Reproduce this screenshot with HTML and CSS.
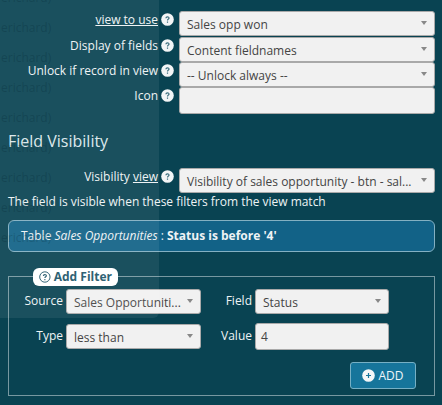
FILE: index.html
```html
<!DOCTYPE html>
<html lang="en">
<head>
<meta charset="utf-8">
<title>Field settings</title>
<link rel="stylesheet" href="styles.css">
</head>
<body>
<svg class="defs" width="0" height="0" aria-hidden="true">
  <symbol id="help" viewBox="0 0 13 13"><circle cx="6.5" cy="6.5" r="6.3" fill="#f3f5f6"/><path d="M4.9 5.2C5 3.3 8.1 3.4 8 5.1C7.9 6.2 6.5 6.1 6.5 7.5M6.5 8.6V9.8" fill="none" stroke="#386b7b" stroke-width="1.2"/></symbol>
</svg>
<main class="panel">
  <section class="rows">
    <div class="row"><label class="label"><u>view to use</u></label><svg class="help"><use href="#help"/></svg><div class="select"><span>Sales opp won</span></div></div>
    <div class="row"><label class="label">Display of fields</label><svg class="help"><use href="#help"/></svg><div class="select"><span>Content fieldnames</span></div></div>
    <div class="row"><label class="label">Unlock if record in view</label><svg class="help"><use href="#help"/></svg><div class="select"><span>-- Unlock always --</span></div></div>
    <div class="row"><label class="label">Icon</label><svg class="help"><use href="#help"/></svg><div class="select input"></div></div>
  </section>
  <h2 class="title">Field Visibility</h2>
  <div class="row"><label class="label">Visibility <u>view</u></label><svg class="help"><use href="#help"/></svg><div class="select"><span>Visibility of sales opportunity - btn - sal...</span></div></div>
  <p class="hint">The field is visible when these filters from the view match</p>
  <div class="info"><span>Table <em>Sales Opportunities</em> : <b>Status is before '4'</b></span></div>
  <section class="filter">
    <h3 class="legend"><svg width="12" height="12" viewBox="0 0 12 12" fill="none" stroke="#20566a"><circle cx="6" cy="6" r="5.3"/><path d="M4.4 4.9C4.5 3.1 7.6 3.1 7.5 4.8C7.4 5.8 6 5.8 6 7M6 8V9.2" stroke-width="1.1"/></svg><span>Add Filter</span></h3>
    <div class="grid">
      <label class="name">Source</label><div class="select"><span>Sales Opportuniti...</span></div>
      <label class="name">Field</label><div class="select"><span>Status</span></div>
      <label class="name">Type</label><div class="select"><span>less than</span></div>
      <label class="name">Value</label><div class="select input value"><span>4</span></div>
    </div>
    <button class="add"><svg width="13" height="13" viewBox="0 0 13 13"><circle cx="6.5" cy="6.5" r="6.3" fill="#f3f6f8"/><path d="M4 6.5H9M6.5 4V9" stroke="#16759b" stroke-width="1.2"/></svg><span>ADD</span></button>
  </section>
</main>
<aside class="ghost">
  <span>erichard)</span><span>erichard)</span><span>erichard)</span><span>erichard)</span><span>erichard)</span><span>erichard)</span><span>erichard)</span><span>erichard)</span><span>erichard)</span>
</aside>
</body>
</html>
```
FILE: styles.css
```css
* { box-sizing: border-box; }
body { margin: 0; height: 405px; overflow: hidden; position: relative; background: #094352; color: #eef3f5; font: 12px/18px "Open Sans", sans-serif; }
.defs { position: absolute; }
.panel { padding: 11px 7px 0 8px; }
.rows { display: grid; grid-template-rows: 26px 25px 25px 27px; }
.row { display: flex; align-items: flex-start; height: 25px; }
.label { width: 150px; text-align: right; font-weight: 500; white-space: nowrap; }
.help { width: 13px; height: 13px; margin: 2px 5px 0 3px; flex: none; }
.select { flex: 1; min-width: 0; height: 25px; display: flex; align-items: center; justify-content: space-between; padding: 3px 7px 0 7px; background: #f1f1f1; border: 1px solid #a9a9a9; border-radius: 3px; color: #444; font-size: 12px; line-height: 18px; white-space: nowrap; }
.select::after { content: ""; border: 3px solid transparent; border-top: 4px solid #888; border-bottom: 0; margin-top: -4px; }
.input { height: 27px; }
.input::after { display: none; }
.title { margin: 16px 0 15px; font-size: 16px; line-height: 23px; font-weight: 400; color: #dce8eb; }
.hint { margin: 0 0 9px; font-weight: 500; letter-spacing: -.02px; white-space: nowrap; }
.info { height: 32px; padding: 6px 12px; background: #126287; border: 1px solid #83b0c2; border-radius: 6px; white-space: nowrap; font-weight: 500; }
.info b { font-weight: 700; }
.filter { margin-top: 24px; height: 120px; border: 1px solid #7798a1; padding: 0 18px 0 12px; }
.legend { display: flex; align-items: center; gap: 3px; width: 85px; height: 18px; margin: -9px 0 3px 12px; padding: 0 6px; border-radius: 6px; background: #fff; color: #20566a; font-size: 12px; font-weight: 700; white-space: nowrap; }
.grid { display: grid; grid-template-columns: 42px 135px 48px 134px; column-gap: 3px; grid-template-rows: 25px 27px; row-gap: 9px; }
.name { text-align: right; padding-top: 3px; font-weight: 500; }
.grid .name:nth-of-type(n+3) { padding-top: 4px; }
.grid > :nth-child(6) { margin-top: 1px; }
.grid .value { padding: 0 5px; }
.add { display: flex; align-items: center; justify-content: center; gap: 3px; width: 66px; height: 27px; margin: 12px 0 0 auto; padding: 0; border: 1px solid #76b0c5; border-radius: 3px; background: #16759b; color: #eef6f9; font: 12px/18px "Open Sans", sans-serif; }
.ghost { position: absolute; inset: 0 auto auto 0; width: 159px; height: 318px; background: rgba(255,255,255,.07); border-radius: 0 0 6px 0; pointer-events: none; overflow: hidden; display: flex; flex-direction: column; color: rgba(0,30,45,.22); font-size: 12px; }
.ghost span { height: 30px; line-height: 18px; padding-left: 1px; flex: none; }
.ghost span:first-child { margin-top: -11px; }
```
